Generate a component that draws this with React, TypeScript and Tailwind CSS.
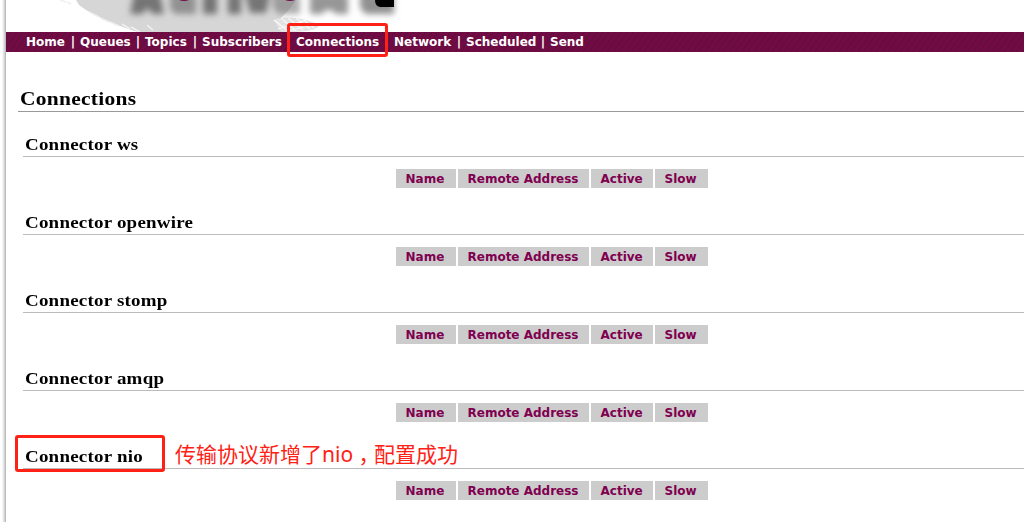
const rows = ["ws", "openwire", "stomp", "amqp", "nio"];

const nav = [
  { label: "Home", cls: "w-10", sep: "|" },
  { label: "Queues", cls: "w-[51px]", sep: "|" },
  { label: "Topics", cls: "w-[43px]", sep: "|" },
  { label: "Subscribers", cls: "w-20", sep: "faint" },
  { label: "Connections", cls: "w-[84px]", sep: "" },
  { label: "Network", cls: "w-[58px]", sep: "|" },
  { label: "Scheduled", cls: "w-[70px]", sep: "|" },
  { label: "Send", cls: "w-[34px]", sep: "" },
];

const columns = [
  { label: "Name", cls: "w-[60px]" },
  { label: "Remote Address", cls: "w-[131px]" },
  { label: "Active", cls: "w-[62px]" },
  { label: "Slow", cls: "w-[53px]" },
];

function Logo() {
  return (
    <svg className="block h-8 w-full" viewBox="0 0 1018 32" preserveAspectRatio="xMinYMin slice" aria-hidden="true">
      <defs>
        <filter id="soft" x="-10%" y="-50%" width="120%" height="200%">
          <feGaussianBlur stdDeviation="3.2" />
        </filter>
        <filter id="edge"><feGaussianBlur stdDeviation="0.5" /></filter>
      </defs>
      <path d="M70 0 L73 5 L80 10 C94 18 112 26 132 32 L290 32 L272 21 C280 13 286 7 290 0Z" fill="#d6d6d6" filter="url(#edge)" />
      <path d="M54 0l6 2M61 2l4 2M83 12l10 5M94 18l9 4M104 22l9 4M116 24l8 5M125 27l9 5M141 25l6 5" stroke="#f0f0f0" strokeWidth="1.6" />
      <path d="M268 20 C278 15 303 18 313 26 C308 32 291 32 275 32Z" fill="#e4e4e4" />
      <path d="M268 20l14 11M275 18l15 13M282 18l15 12M290 18l14 11M299 21l9 7M272 29l28-9M282 31l28-7" stroke="#fafafa" strokeWidth="1.1" />
      <g filter="url(#soft)" fill="#747474">
        <path d="M128-6h26l4 20h-12l-3-5h-3l-3 5h-13Z" />
        <path d="M164-6h26v20h-20q-6-2-6-9Z" opacity="0.7" />
        <path d="M197-6h14v20h-14ZM222-6h13v20h-13Z" />
        <path d="M239-6h25l-4 19h-16Z" />
        <path d="M267-6h27v20h-20q-7-2-7-10Z" opacity="0.6" />
        <path d="M304-6h38v20h-12l-5-4h-5l-4 4h-12Z" opacity="0.75" />
        <path d="M354-6h34v20h-27q-7-2-7-11Z" opacity="0.8" />
      </g>
      <path d="M173 0h10q-5 2-10 0ZM279 0h10q-5 2-10 0Z" fill="#720b4a" />
      <path d="M369 0h19v7h-14q-5-1-5-7Z" fill="#000" />
    </svg>
  );
}

export default function App() {
  return (
    <main className="relative flex h-[522px] w-full overflow-hidden bg-white text-black">
      <div className="w-1.5 shrink-0 bg-[linear-gradient(90deg,#fff_0px,#fff_2px,#eee_3px,#ccc_5px,#aaa_6px)]" />
      <div className="min-w-0 flex-1">
        <Logo />
        <nav className="flex h-5 items-center bg-[#6d0b40] bg-[repeating-linear-gradient(125deg,#720a45_0px,#720a45_3px,#5d1038_4px,#720a45_5px)] pl-5 font-['DejaVu_Sans'] text-[12px] leading-5 font-bold whitespace-nowrap text-white">
          {nav.map((item) => (
            <span key={item.label} className="flex">
              <a className={item.cls}>{item.label}</a>
              {item.sep === "|" && <span className="w-3.5 text-center">|</span>}
              {item.sep === "faint" && <span className="w-3.5 text-center text-[#b1124d]">|</span>}
              {item.label === "Connections" && <span className="w-3.5" />}
            </span>
          ))}
        </nav>
        <div className="pt-9 pl-3">
          <h1 className="h-6 border-b border-[#999] pl-0.5 font-['Liberation_Serif'] text-[19px] leading-[22px] font-bold">
            <span className="inline-block origin-left scale-x-[1.13] tracking-[0.25px]">Connections</span>
          </h1>
          <div className="pt-5 pl-[5px]">
            {rows.map((row) => (
              <section key={row} className="h-[78px]">
                <h2 className="relative h-[25px] border-b border-[#bbb] pl-0.5 font-['Liberation_Serif'] text-[17px] leading-[26px] font-bold">
                  <span className="inline-block origin-left scale-x-[1.115] tracking-[0.2px]">Connector {row}</span>
                  {row === "nio" && (
                    <>
                      <span className="absolute top-[-9px] left-[-8px] h-[37px] w-[150px] rounded-[3px] border-3 border-[#ff2115]" />
                      <span className="absolute top-[-6px] left-[152px] flex font-['Noto_Sans','Noto_Sans_CJK_SC',sans-serif] text-[21px] leading-[32px] font-normal whitespace-nowrap text-[#ff2115]">
                        <span>传输协议新增了nio</span>
                        <span lang="zh-TW" className="mt-1.5 font-['Noto_Sans_CJK_TC',sans-serif] leading-[32px]">，</span>
                        <span>配置成功</span>
                      </span>
                    </>
                  )}
                </h2>
                <div className="flex gap-0.5 pt-3 pl-[373px] font-['DejaVu_Sans'] text-[12px] leading-[20px] font-bold text-[#800050]">
                  {columns.map((c) => <span key={c.label} className={`${c.cls} h-[19px] bg-[#ccc] pl-[9.5px] whitespace-nowrap`}>{c.label}</span>)}
                </div>
              </section>
            ))}
          </div>
        </div>
      </div>
      <div className="absolute top-[23px] left-[287px] h-[34px] w-[101px] rounded-[3px] border-3 border-[#ff2115]" />
    </main>
  );
}
